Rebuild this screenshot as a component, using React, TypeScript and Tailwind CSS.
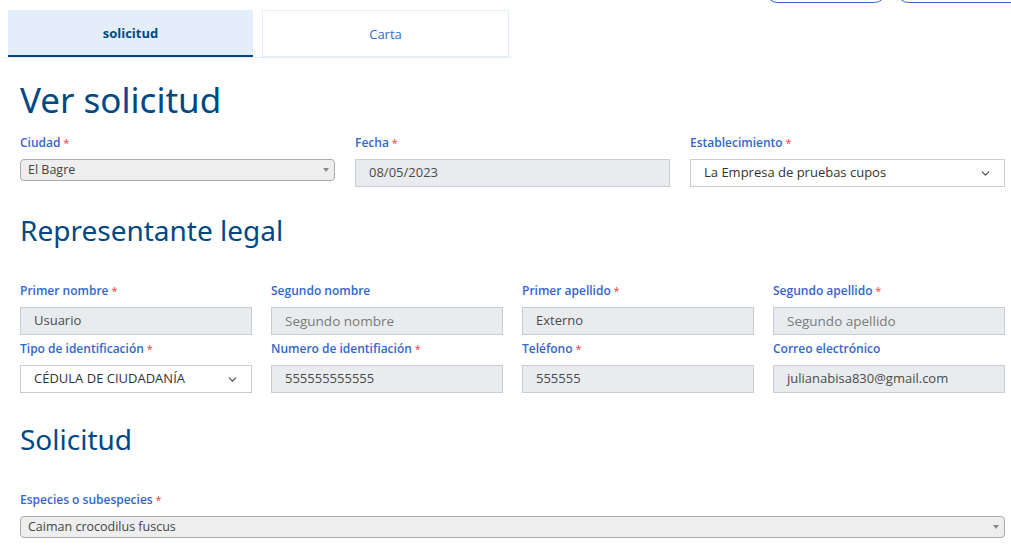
import React from "react";

const labelCls = "block text-[12px] font-semibold text-[#3366cc] leading-[16px] mb-2";
const inputCls =
  "h-[28px] w-full border border-[#c9ccd0] bg-[#e9ecef] px-[13px] text-[13px] text-[#4a4a4a] flex items-center";

function Label({ text, req }: { text: string; req?: boolean }) {
  return (
    <label className={labelCls}>
      {text}
      {req && <span className="text-[11px] font-normal text-[#f03c3c]"> *</span>}
    </label>
  );
}

function Select2({ value }: { value: string }) {
  return (
    <div className="relative h-[22px] w-full rounded-[4px] border border-[#aaa] bg-[#eeeeee] pl-[7px] text-[12.5px] leading-[20px] text-[#444]">
      {value}
      <span className="absolute right-[5px] top-[8px] h-0 w-0 border-x-[3.5px] border-t-[4px] border-x-transparent border-t-[#888]" />
    </div>
  );
}

function Chevron() {
  return (
    <svg width="13" height="13" viewBox="0 0 24 24" fill="none" stroke="#444" strokeWidth="2" strokeLinecap="round" strokeLinejoin="round">
      <path d="m6 9 6 6 6-6" />
    </svg>
  );
}

function SelectBox({ value }: { value: string }) {
  return (
    <div className="flex h-[28px] w-full items-center justify-between border border-[#c9ccd0] bg-white pl-[13px] pr-[12px] text-[13px] text-[#333]">
      <span>{value}</span>
      <Chevron />
    </div>
  );
}

function Field({ label, req, value, placeholder }: { label: string; req?: boolean; value?: string; placeholder?: string }) {
  return (
    <div>
      <Label text={label} req={req} />
      <div className={inputCls}>
        {value ? <span>{value}</span> : <span className="text-[13.5px] text-[#7a7a7a]">{placeholder}</span>}
      </div>
    </div>
  );
}

export default function App() {
  return (
    <div className="min-h-screen bg-white font-['Open_Sans','Noto_Sans',sans-serif]">
      {/* top buttons cut off */}
      <div className="relative h-0">
        <div className="absolute left-[766px] top-[-20px] h-[23px] w-[120px] rounded-full border border-[#3366cc]" />
        <div className="absolute left-[897px] top-[-20px] h-[23px] w-[130px] rounded-full border border-[#3366cc]" />
      </div>

      {/* Tabs */}
      <div className="pt-[10px] pl-[4px]">
        <div className="flex w-[509px] border-b border-[#e4eefb]">
          <div className="ml-[4px] flex h-[47px] w-[245px] items-center justify-center border-b-2 border-[#004884] bg-[#e4eefb] pt-[2px] text-[13px] font-bold text-[#004884]">
            solicitud
          </div>
          <div className="ml-[9px] flex h-[47px] w-[247px] items-center justify-center border border-[#e4eefb] pt-[2px] text-[13px] text-[#3366cc]">
            Carta
          </div>
        </div>
      </div>

      <div className="px-[20px] pr-[6px]">
        <h1 className="mt-[20px] text-[35px] leading-[44px] text-[#004884] font-['Noto_Sans',sans-serif]">Ver solicitud</h1>

        <div className="mt-[13px] grid grid-cols-3 gap-x-[20px]">
          <div>
            <Label text="Ciudad" req />
            <Select2 value="El Bagre" />
          </div>
          <Field label="Fecha" req value="08/05/2023" />
          <div>
            <Label text="Establecimiento" req />
            <SelectBox value="La Empresa de pruebas cupos" />
          </div>
        </div>

        <h2 className="mt-[25px] text-[28px] leading-[36px] text-[#004884] font-['Noto_Sans',sans-serif]">Representante legal</h2>

        <div className="mt-[35px] grid grid-cols-4 gap-x-[19px] gap-y-[6px]">
          <Field label="Primer nombre" req value="Usuario" />
          <Field label="Segundo nombre" placeholder="Segundo nombre" />
          <Field label="Primer apellido" req value="Externo" />
          <Field label="Segundo apellido" req placeholder="Segundo apellido" />
          <div>
            <Label text="Tipo de identificación" req />
            <SelectBox value="CÉDULA DE CIUDADANÍA" />
          </div>
          <Field label="Numero de identifiación" req value="555555555555" />
          <Field label="Teléfono" req value="555555" />
          <Field label="Correo electrónico" value="julianabisa830@gmail.com" />
        </div>

        <h2 className="mt-[28px] text-[28px] leading-[36px] text-[#004884] font-['Noto_Sans',sans-serif]">Solicitud</h2>

        <div className="mt-[35px]">
          <Label text="Especies o subespecies" req />
          <Select2 value="Caiman crocodilus fuscus" />
        </div>
      </div>
    </div>
  );
}
